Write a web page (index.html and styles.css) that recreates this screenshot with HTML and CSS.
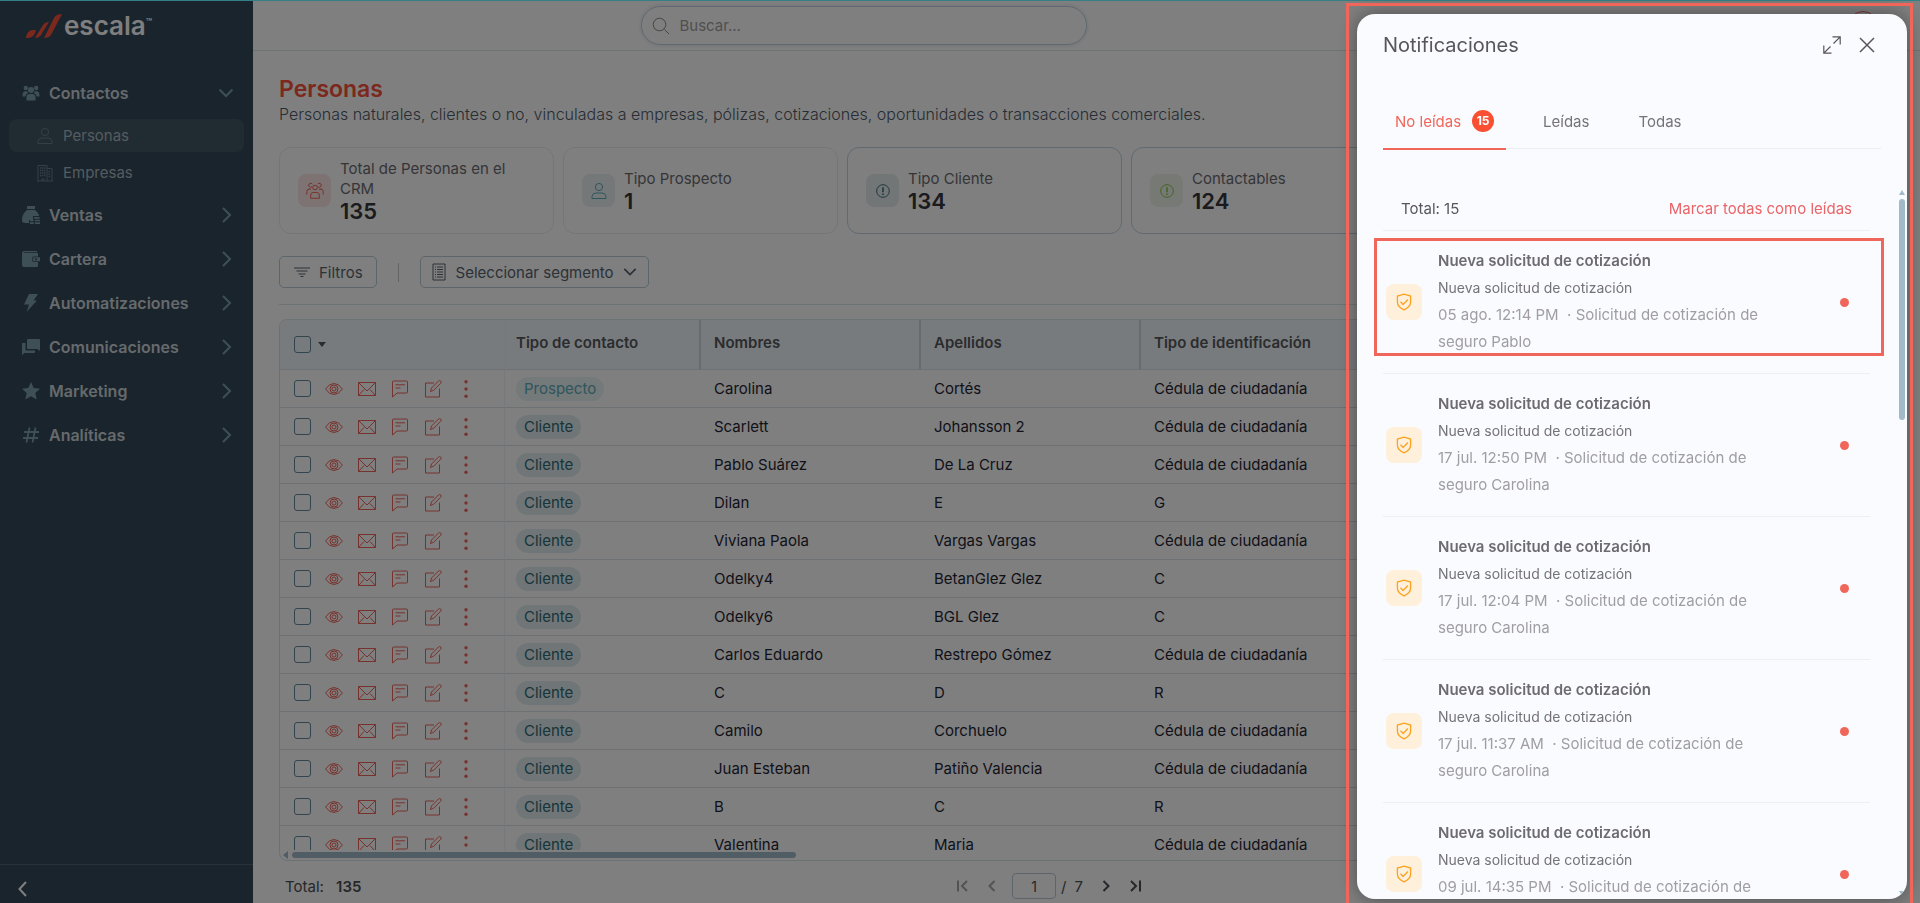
FILE: index.html
```html
<!DOCTYPE html>
<html lang="es">

<head>
    <meta charset="UTF-8">
    <meta name="viewport" content="width=device-width, initial-scale=1.0">
    <title>Escala - Personas</title>
    <link rel="stylesheet" href="styles.css">
</head>

<body>
    <!-- iconos -->
    <svg class="sprite" aria-hidden="true">
        <symbol id="i-users" viewBox="0 0 18 18">
            <circle cx="9" cy="6" r="3"/><circle cx="3.8" cy="4" r="2.2"/><circle cx="14.2" cy="4" r="2.2"/>
            <path d="M4.5 16.5v-3.5a3 3 0 0 1 3-3h3a3 3 0 0 1 3 3v3.5zM.6 12.5V10a3 3 0 0 1 2.4-2.8h2.2A5 5 0 0 0 6.2 9 4.5 4.5 0 0 0 3.2 12.5zM17.4 12.5V10A3 3 0 0 0 15 7.2h-2.2A5 5 0 0 1 11.8 9a4.5 4.5 0 0 1 3 3.500z"/>
        </symbol>
        <symbol id="i-users-o" viewBox="0 0 18 18">
            <circle cx="9" cy="5.5" r="2.3"/><path d="M4.7 16.3v-3.3a2.5 2.5 0 0 1 2.5-2.5h3.6a2.5 2.5 0 0 1 2.5 2.5v3.3zM.8 12.5V9.5a2.3 2.3 0 0 1 2.3-2.3H5M17.2 12.5V9.5a2.3 2.3 0 0 0-2.3-2.3H13M6 4.800A2 2 0 1 1 6.3 2M12 4.800A2 2 0 1 0 11.7 2M3 6.5v.7M15 6.5v.7"/>
        </symbol>
        <symbol id="i-user" viewBox="0 0 18 18">
            <circle cx="9" cy="5" r="3.6"/><path d="M2 16.5v-2a4 4 0 0 1 4-3.500h6a4 4 0 0 1 4 3.500v2z"/>
        </symbol>
        <symbol id="i-building" viewBox="0 0 18 18">
            <path d="M2 17V1.500h9V17M11 4.500h5V17M1 17h16M6 17v-2h2v2"/><path d="M4 4h5.500M4 6.500h5.500M4 9h5.500M4 11.500h5.500M12.500 7.500h2M12.500 10h2M12.500 12.500h2" stroke-dasharray="1.4 .6" stroke-width="1.4"/>
        </symbol>
        <symbol id="i-bag" viewBox="0 0 18 18">
            <path d="M5 0h8v3H5zM5 4h8c3 3 4.500 5 4 6h-6v4H7v3H3q-3 0-3-3Q0 8 5 4z"/><path d="M12 11h5.500v1.800H12zM7.800 13.800h4v1.500h-4zM7.800 16.200h4V18h-4zM12.800 13.800H18v1.500h-5.200zM12.800 16.200H18V18h-5.200z"/>
        </symbol>
        <symbol id="i-wallet" viewBox="0 0 18 18">
            <path fill-rule="evenodd" d="M2.500 1H15v1.200H2.200v.8H16v3.500h-4a2 2 0 0 0-2 2v1.500a2 2 0 0 0 2 2h4V16a1 1 0 0 1-1 1H2a2 2 0 0 1-2-2V3.500A2.500 2.500 0 0 1 2.500 1zM12 7.300h6v4h-6a1.500 1.500 0 0 1-1.300-1.500v-1A1.500 1.500 0 0 1 12 7.300zm1 1.200v1.700h1.700V8.500z"/>
        </symbol>
        <symbol id="i-bolt" viewBox="0 0 18 18"><path d="M7 0h9l-4.500 6.500H15L4.500 18 7 10.500H2z"/></symbol>
        <symbol id="i-chat2" viewBox="0 0 18 18"><path d="M6 1h11a1 1 0 0 1 1 1v11l-2.500-2H6a1 1 0 0 1-1-1V2a1 1 0 0 1 1-1zM0 5h3.500v6.500a1 1 0 0 0 1 1H13V14a1 1 0 0 1-1 1H2.500L0 17z"/></symbol>
        <symbol id="i-star" viewBox="0 0 18 18"><path d="M9 0l2.700 6L18 6.700l-4.700 4.300 1.400 6.500L9 14.200l-5.700 3.300L4.700 11 0 6.700 6.300 6z"/></symbol>
        <symbol id="i-hash" viewBox="0 0 18 18"><path d="M7.500 1.500l-3 15M13.500 1.500l-3 15M2 6h15M1 12h15" stroke-width="1.8"/></symbol>
        <symbol id="i-right" viewBox="0 0 16 16"><path d="M5 1l7 7-7 7"/></symbol>
        <symbol id="i-left" viewBox="0 0 16 16"><path d="M11 1L4.500 8l6.500 7"/></symbol>
        <symbol id="i-down" viewBox="0 0 16 16"><path d="M1.500 4.500L8 11l6.500-6.500"/></symbol>
        <symbol id="i-first" viewBox="0 0 16 16"><path d="M3 2.500v11M12 3L7 8l5 5"/></symbol>
        <symbol id="i-last" viewBox="0 0 16 16"><path d="M13 2.500v11M4 3l5 5-5 5"/></symbol>
        <symbol id="i-prev" viewBox="0 0 16 16"><path d="M10.500 3l-5 5 5 5"/></symbol>
        <symbol id="i-next" viewBox="0 0 16 16"><path d="M5.500 3l5 5-5 5"/></symbol>
        <symbol id="i-search" viewBox="0 0 18 18"><circle cx="7.5" cy="7.5" r="6.3"/><path d="M12.500 12.500L17 17"/></symbol>
        <symbol id="i-info" viewBox="0 0 18 18"><circle cx="9" cy="9" r="6.3"/><path d="M9 5.200v5M9 11.500v1.500" stroke-width="1.6"/></symbol>
        <symbol id="i-filter" viewBox="0 0 18 18"><path d="M1 5h16M3.500 8h11M5.500 11h7M7.500 13.500h3"/></symbol>
        <symbol id="i-list" viewBox="0 0 18 18"><path d="M3 1h12v16H3z"/><path d="M5 4h1M7 4h6M5 6.500h1M7 6.500h6M5 9h1M7 9h6M5 11.500h1M7 11.500h6M5 14h1M7 14h6"/></symbol>
        <symbol id="i-eye" viewBox="0 0 18 18"><path d="M.6 9Q4 3.500 9 3.500T17.400 9Q14 14.500 9 14.500T.6 9z"/><circle cx="9" cy="9" r="4"/><circle cx="9" cy="9" r="2"/></symbol>
        <symbol id="i-mail" viewBox="0 0 18 18"><path d="M.5 2.500h17v13H.5zM.5 2.500L9 11l8.500-8.500M.5 15.500l5.500-6M17.500 15.500l-5.500-6"/></symbol>
        <symbol id="i-chat" viewBox="0 0 18 18"><path d="M1.500 17V2a1 1 0 0 1 1-1h13a1 1 0 0 1 1 1v10a1 1 0 0 1-1 1H6zM4.500 4.800h9.500M4.500 8h5"/></symbol>
        <symbol id="i-edit" viewBox="0 0 18 18"><path d="M10 3H1.500v14h14V8.500M6.500 11.500l1-3.500L14.500 1a1.500 1.500 0 0 1 2.200 2.200l-7 7z"/></symbol>
        <symbol id="i-dots" viewBox="0 0 18 18"><circle cx="9" cy="1.8" r="1.7"/><circle cx="9" cy="9" r="1.7"/><circle cx="9" cy="16.2" r="1.7"/></symbol>
        <symbol id="i-shield" viewBox="0 0 18 18"><path d="M9 1.200L15.600 3v6q0 5-6.600 7.800Q2.400 14 2.400 9V3z"/><path d="M5.500 8.800l2.600 2.700 4.800-5"/></symbol>
        <symbol id="i-expand" viewBox="0 0 18 18"><path d="M9.500.8h7.700v7.700M17.200.8l-6.700 6.700M8.500 17.200H.8V9.500M.8 17.200l6.700-6.700"/></symbol>
        <symbol id="i-close" viewBox="0 0 16 16"><path d="M1 1l14 14M15 1L1 15"/></symbol>
    </svg>

    <div class="layout">
        <aside class="sidebar">
            <a class="logo" href="#">
                <svg class="logo-mark" viewBox="0 0 36 24"><path d="M0 24q1-8 7-8h3q-2 8-8 8zM9 24l8-13q2-3 6-3l-8 13q-2 3-6 3zM18 24L28 4q2-4 8-4L25 21q-2 3-7 3z"/></svg>
                <span>escala</span><sup>™</sup>
            </a>
            <nav class="menu">
                <a href="#"><svg class="ico fill"><use href="#i-users"/></svg><span>Contactos</span><svg class="arrow"><use href="#i-down"/></svg></a>
                <div class="submenu">
                    <a class="active" href="#"><svg class="ico"><use href="#i-user"/></svg>Personas</a>
                    <a href="#"><svg class="ico"><use href="#i-building"/></svg>Empresas</a>
                </div>
                <a href="#"><svg class="ico fill"><use href="#i-bag"/></svg><span>Ventas</span><svg class="arrow"><use href="#i-right"/></svg></a>
                <a href="#"><svg class="ico fill"><use href="#i-wallet"/></svg><span>Cartera</span><svg class="arrow"><use href="#i-right"/></svg></a>
                <a href="#"><svg class="ico fill"><use href="#i-bolt"/></svg><span>Automatizaciones</span><svg class="arrow"><use href="#i-right"/></svg></a>
                <a href="#"><svg class="ico fill"><use href="#i-chat2"/></svg><span>Comunicaciones</span><svg class="arrow"><use href="#i-right"/></svg></a>
                <a href="#"><svg class="ico fill"><use href="#i-star"/></svg><span>Marketing</span><svg class="arrow"><use href="#i-right"/></svg></a>
                <a href="#"><svg class="ico"><use href="#i-hash"/></svg><span>Analíticas</span><svg class="arrow"><use href="#i-right"/></svg></a>
            </nav>
            <button class="collapse" aria-label="Contraer menú"><svg><use href="#i-left"/></svg></button>
        </aside>

        <div class="main">
            <header class="topbar">
                <label class="search">
                    <svg><use href="#i-search"/></svg>
                    <input type="text" placeholder="Buscar..." aria-label="Buscar">
                </label>
                <button class="avatar" aria-label="Perfil"></button>
            </header>

            <main class="content">
                <h1>Personas</h1>
                <p class="desc">Personas naturales, clientes o no, vinculadas a empresas, pólizas, cotizaciones, oportunidades o transacciones comerciales.</p>

                <div class="cards">
                    <div class="card">
                        <div class="card-icon red"><svg><use href="#i-users-o"/></svg></div>
                        <div><div class="label">Total de Personas en el CRM</div><div class="num">135</div></div>
                    </div>
                    <div class="card">
                        <div class="card-icon teal"><svg><use href="#i-user"/></svg></div>
                        <div><div class="label">Tipo Prospecto</div><div class="num">1</div></div>
                    </div>
                    <div class="card click">
                        <div class="card-icon dark"><svg><use href="#i-info"/></svg></div>
                        <div><div class="label">Tipo Cliente</div><div class="num">134</div></div>
                    </div>
                    <div class="card click">
                        <div class="card-icon green"><svg><use href="#i-info"/></svg></div>
                        <div><div class="label">Contactables</div><div class="num">124</div></div>
                    </div>
                </div>

                <div class="tools">
                    <button class="btn"><svg><use href="#i-filter"/></svg>Filtros</button>
                    <span class="sep"></span>
                    <label class="btn segment">
                        <svg><use href="#i-list"/></svg>
                        <select aria-label="Segmento"><option>Seleccionar segmento</option></select>
                        <svg class="caret"><use href="#i-down"/></svg>
                    </label>
                </div>

                <div class="grid">
                    <div class="grid-view">
                        <table>
                            <colgroup><col class="c-actions"><col class="c-type"><col class="c-data"><col class="c-data"><col class="c-data"><col></colgroup>
                            <thead>
                                <tr>
                                    <th><div class="actions"><input type="checkbox" aria-label="Seleccionar todo"><i class="tri"></i></div></th>
                                    <th>Tipo de contacto</th>
                                    <th>Nombres</th>
                                    <th>Apellidos</th>
                                    <th>Tipo de identificación</th>
                                    <th></th>
                                </tr>
                            </thead>
                            <tbody id="rows"></tbody>
                        </table>
                    </div>
                    <div class="hscroll"><i></i><b></b></div>
                </div>

                <footer class="pager">
                    <div class="total">Total: <strong>135</strong></div>
                    <div class="pages">
                        <button disabled aria-label="Primera"><svg><use href="#i-first"/></svg></button>
                        <button disabled aria-label="Anterior"><svg><use href="#i-prev"/></svg></button>
                        <input type="text" value="1" aria-label="Página">
                        <span>/</span><span>7</span>
                        <button aria-label="Siguiente"><svg><use href="#i-next"/></svg></button>
                        <button aria-label="Última"><svg><use href="#i-last"/></svg></button>
                    </div>
                </footer>
            </main>
        </div>
    </div>

    <div class="overlay"></div>
    <div class="progress"></div>
    <div class="frame"></div>

    <section class="drawer">
        <div class="drawer-head">
            <h2>Notificaciones</h2>
            <button aria-label="Expandir"><svg class="expand"><use href="#i-expand"/></svg></button>
            <button aria-label="Cerrar"><svg><use href="#i-close"/></svg></button>
        </div>
        <div class="tabs">
            <button class="active">No leídas <span class="badge">15</span></button>
            <button>Leídas</button>
            <button>Todas</button>
        </div>
        <div class="drawer-body">
            <div class="list">
                <div class="summary"><span>Total: 15</span><a href="#">Marcar todas como leídas</a></div>
                <div id="notes"></div>
            </div>
            <div class="vscroll"><i></i><b></b><i class="end"></i></div>
        </div>
    </section>

    <script src="script.js"></script>
</body>

</html>
```

FILE: styles.css
```css
* {
    box-sizing: border-box;
}
html , body {
    height: 100%;
}
body {
    margin: 0;
    overflow: hidden;
    font-family: Inter, "Noto Sans", sans-serif;
    font-size: 15px;
    color: #1f2533;
}
a {
    text-decoration: none;
    color: inherit;
}
button , input , select {
    font: inherit;
    color: inherit;
}
button {
    background: none;
    border: 0;
    padding: 0;
}
svg {
    width: 18px;
    height: 18px;
    flex: none;
    display: block;
    fill: none;
    stroke: currentColor;
    stroke-width: 1;
}
.sprite {
    display: none;
}
.layout {
    display: flex;
    height: 100%;
}

/* menu lateral */
.sidebar {
    width: 253px;
    flex: none;
    display: flex;
    flex-direction: column;
    background-color: #344858;
    color: #ccd5da;
}
.logo {
    display: flex;
    height: 71px;
    padding: 14px 0 0 26px;
    color: #fff;
    font-size: 26px;
    line-height: 24px;
    font-weight: 600;
}
.logo-mark {
    width: 36px;
    height: 24px;
    margin-right: 2px;
    fill: #f8503a;
    stroke: none;
}
.logo sup {
    font-size: 10px;
    line-height: 16px;
}
.menu {
    flex: 1;
}
.menu > a {
    display: flex;
    align-items: center;
    height: 44px;
    padding: 0 19px 0 22px;
    font-size: 16px;
    font-weight: 600;
}
.menu > a span {
    flex: 1;
    padding-left: 9px;
}
.ico {
    color: #7d9fad;
}
.ico.fill {
    fill: currentColor;
    stroke: none;
}
.arrow {
    width: 16px;
    height: 16px;
    color: #7d9fad;
    stroke-width: 2;
}
.submenu {
    padding: 4px 9px 0;
}
.submenu a {
    display: flex;
    align-items: center;
    gap: 9px;
    height: 33px;
    margin-bottom: 4px;
    padding-left: 27px;
    border-radius: 8px;
    color: #a9b8c1;
}
.submenu .active {
    background-color: #435665;
}
.submenu .ico {
    color: #66828e;
}
.collapse {
    height: 39px;
    padding: 10px 0 0 15px;
    border-top: 1px solid #506271;
    color: #fff;
}
.collapse svg {
    width: 16px;
    height: 16px;
    stroke-width: 2;
}

/* cabecera */
.main {
    flex: 1;
    min-width: 0;
    display: flex;
    flex-direction: column;
    background-color: #fff;
}
.topbar {
    display: grid;
    grid-template-columns: 1fr 1fr;
    align-items: center;
    height: 51px;
    padding-top: 1px;
    border-bottom: 1px solid #dbe9ec;
}
.search {
    justify-self: end;
    display: flex;
    align-items: center;
    gap: 10px;
    width: 446px;
    height: 39px;
    padding: 0 10px;
    border: 1px solid #c0d2de;
    border-radius: 20px;
    box-shadow: 0 0 4px #d5dde2;
    color: #8b8b8b;
}
.search input {
    flex: 1;
    border: 0;
    outline: 0;
    padding: 0;
    background: none;
}
.search input::placeholder {
    color: #a0a0a0;
}
.avatar {
    justify-self: end;
    width: 30px;
    height: 30px;
    margin-right: 42px;
    border: 1px solid #f0645a;
    border-radius: 50%;
}

/* contenido */
.content {
    flex: 1;
    min-height: 0;
    display: flex;
    flex-direction: column;
    padding: 24px 27px 0 26px;
}
h1 {
    margin: 0;
    font-size: 23px;
    line-height: 28px;
    font-weight: 600;
    color: #f8503a;
}
.desc {
    margin: 0;
    font-size: 16px;
    line-height: 22px;
    font-weight: 300;
    color: #4f5a68;
}
.cards {
    display: flex;
    gap: 9px;
    margin: 22px 0;
    overflow: hidden;
}
.card {
    flex: 0 0 275px;
    display: flex;
    align-items: center;
    gap: 9px;
    height: 87px;
    padding: 0 18px;
    border: 1px solid #ebebee;
    border-radius: 12px;
}
.card.click {
    border-color: #c0d4e0;
}
.card-icon {
    display: flex;
    align-items: center;
    justify-content: center;
    flex: none;
    width: 33px;
    height: 33px;
    border-radius: 8px;
}
.red {
    color: #f0645a;
    background-color: #fbe6e4;
}
.teal {
    color: #5eabb8;
    background-color: #e8f1f3;
}
.dark {
    color: #3d707b;
    background-color: #e4ecee;
}
.green {
    color: #86c54b;
    background-color: #eff5e8;
}
.label {
    line-height: 20px;
    color: #6b6b70;
}
.num {
    font-size: 22px;
    line-height: 24px;
    font-weight: 600;
    color: #37373c;
}
.tools {
    display: flex;
    align-items: center;
    gap: 21px;
    padding-bottom: 16px;
    border-bottom: 1px solid #dbe7ea;
}
.btn {
    display: flex;
    align-items: center;
    gap: 8px;
    height: 32px;
    padding: 0 13px;
    border: 1px solid #b9cbd5;
    border-radius: 5px;
    color: #56646f;
}
.btn select {
    appearance: none;
    border: 0;
    padding: 0;
    background: none;
}
.segment {
    padding: 0 11px 0 9px;
}
.btn .caret {
    width: 14px;
    height: 14px;
    stroke-width: 2;
}
.sep {
    width: 1px;
    height: 19px;
    background-color: #c5c9cc;
}

/* tabla */
.grid {
    flex: 1;
    min-height: 0;
    display: flex;
    flex-direction: column;
    margin-top: 14px;
    border: 1px solid #d9e3e8;
    border-radius: 8px;
    overflow: hidden;
}
.grid-view {
    flex: 1;
    min-height: 0;
    overflow: hidden;
}
table {
    width: 100%;
    table-layout: fixed;
    border-collapse: separate;
    border-spacing: 0;
}
.c-actions {
    width: 225px;
}
.c-type {
    width: 196px;
}
.c-data {
    width: 220px;
}
th , td {
    height: 38px;
    padding: 0 13px;
    border-bottom: 1px solid #dce2e6;
    text-align: left;
    white-space: nowrap;
}
th {
    height: 50px;
    padding-bottom: 4px;
    background-color: #f0f6fa;
    border-right: 2px solid #d2d8dc;
    font-weight: 600;
    color: #55585d;
}
th:nth-child(2) , td:nth-child(2) {
    padding-left: 11px;
}
th:first-child , td:first-child {
    padding: 0 0 0 14px;
    border-right: 1px solid #f0f2f4;
}
.actions {
    display: flex;
    align-items: center;
    color: #f0645a;
}
.actions input {
    appearance: none;
    width: 17px;
    height: 17px;
    margin: 0 14px 0 0;
    border: 1px solid #64899c;
    border-radius: 3px;
}
.actions svg {
    margin-right: 15px;
}
.actions .dots {
    fill: currentColor;
    stroke: none;
}
th .actions input {
    margin-right: 7px;
}
.tri {
    border: 4px solid transparent;
    border-top: 5px solid #55585d;
    border-bottom: 0;
}
.pill {
    display: inline-block;
    padding: 0 8px;
    line-height: 24px;
    border-radius: 12px;
    background-color: #e0ebee;
    color: #316b74;
}
.pill.new {
    background-color: #e8f2f4;
    color: #5fadb8;
}
.hscroll {
    display: flex;
    align-items: center;
    gap: 4px;
    height: 10px;
    padding-left: 3px;
}
.hscroll i {
    border: 4px solid transparent;
    border-right: 5px solid #a0bac8;
    border-left: 0;
}
.hscroll b {
    width: 504px;
    height: 6px;
    border-radius: 3px;
    background-color: #a0bac8;
}
.pager {
    display: grid;
    grid-template-columns: 1fr auto 1fr;
    align-items: center;
    height: 42px;
    padding: 8px 80px 0 6px;
    color: #4b4f55;
}
.total strong {
    padding-left: 8px;
    font-weight: 600;
}
.pages {
    display: flex;
    align-items: center;
    gap: 5px;
}
.pages button {
    width: 24px;
    padding-left: 4px;
}
.pages button:disabled {
    opacity: .5;
}
.pages svg {
    width: 16px;
    height: 16px;
    stroke-width: 2;
}
.pages span + span {
    padding: 0 6px 0 3px;
}
.pages input {
    width: 44px;
    height: 26px;
    margin-left: 3px;
    border: 1px solid #b9cbd5;
    border-radius: 4px;
    background: none;
    text-align: center;
    font-size: 14px;
}

/* capas */
.overlay {
    position: fixed;
    inset: 0;
    background-color: rgba(0, 0, 0, .5);
}
.progress {
    position: fixed;
    top: 0;
    left: 0;
    right: 0;
    height: 1px;
    background-color: #328085;
}
.frame {
    position: fixed;
    top: 3px;
    right: 7px;
    bottom: -5px;
    width: 567px;
    border: 3px solid #f0665b;
    z-index: 2;
}

/* panel de notificaciones */
.drawer {
    position: fixed;
    top: 14px;
    right: 13px;
    bottom: 4px;
    width: 550px;
    display: flex;
    flex-direction: column;
    border-radius: 18px;
    overflow: hidden;
    background-color: #fafbfe;
    box-shadow: 0 0 20px rgba(0, 0, 0, .4);
    color: #58565b;
}
.drawer-head {
    display: flex;
    align-items: center;
    gap: 18px;
    height: 61px;
    padding: 0 32px 0 26px;
}
.drawer-head h2 {
    flex: 1;
    margin: 0;
    font-size: 20px;
    font-weight: 400;
}
.drawer-head svg {
    width: 16px;
    height: 16px;
    stroke-width: 1.5;
}
.drawer-head .expand {
    width: 18px;
    height: 18px;
    stroke-width: 1.2;
}
.tabs {
    display: flex;
    height: 61px;
    margin: 13px 26px 0;
    border-bottom: 1px solid #eceef1;
}
.tabs button {
    height: 62px;
    padding: 6px 12px 0;
    margin-right: 25px;
    color: #757377;
    border-bottom: 2px solid transparent;
}
.tabs .active {
    display: flex;
    align-items: center;
    gap: 11px;
    color: #f0665b;
    border-color: #f0665b;
}
.badge {
    width: 22px;
    line-height: 22px;
    border-radius: 50%;
    background-color: #f94f33;
    color: #fff;
    font-size: 12px;
    font-weight: 700;
}
.drawer-body {
    flex: 1;
    min-height: 0;
    display: flex;
    margin-top: 39px;
}
.list {
    flex: 1;
    padding: 0 27px 0 26px;
    overflow: hidden;
}
.summary {
    display: flex;
    justify-content: space-between;
    height: 43px;
    padding: 9px 18px 0;
    line-height: 24px;
    border-bottom: 1px solid #eeeff2;
}
.summary a {
    color: #ea6468;
}
.note {
    position: relative;
    display: flex;
    align-items: center;
    height: 143px;
    padding-left: 3px;
    border-bottom: 1px solid #eeeff2;
    line-height: 27px;
}
.note-icon {
    display: flex;
    align-items: center;
    justify-content: center;
    width: 36px;
    height: 36px;
    margin-right: 16px;
    border-radius: 8px;
    background-color: #fff0dc;
    color: #fba31f;
}
.note-icon svg {
    stroke-width: 1.3;
}
.note-text {
    width: 336px;
    padding-bottom: 2px;
    color: #757377;
}
.note-text h3 {
    margin: 0;
    font-size: 15px;
    font-weight: 600;
    color: #6d6b70;
}
.note-text p {
    margin: 0;
    font-size: 14px;
}
.note-text .date {
    font-size: 15px;
    color: #a09ea2;
}
.dot {
    width: 9px;
    height: 9px;
    margin: 0 21px 0 auto;
    border-radius: 50%;
    background-color: #f0665b;
}
.note:first-child::after {
    content: "";
    position: absolute;
    top: 7px;
    right: -14px;
    bottom: 17px;
    left: -9px;
    border: 3px solid #f0665b;
}
.vscroll {
    display: flex;
    flex-direction: column;
    align-items: center;
    width: 10px;
    padding: 2px 0 3px;
}
.vscroll i {
    border: 3px solid transparent;
    border-bottom: 5px solid #a0bac8;
    border-top: 0;
}
.vscroll .end {
    margin-top: auto;
    border-top: 5px solid #a0bac8;
    border-bottom: 0;
}
.vscroll b {
    width: 6px;
    height: 221px;
    margin-top: 4px;
    border-radius: 3px;
    background-color: #a0bac8;
}
```

FILE: script.js
```js
var people = [
    ["Prospecto", "Carolina", "Cortés", "Cédula de ciudadanía"],
    ["Cliente", "Scarlett", "Johansson 2", "Cédula de ciudadanía"],
    ["Cliente", "Pablo Suárez", "De La Cruz", "Cédula de ciudadanía"],
    ["Cliente", "Dilan", "E", "G"],
    ["Cliente", "Viviana Paola", "Vargas Vargas", "Cédula de ciudadanía"],
    ["Cliente", "Odelky4", "BetanGlez Glez", "C"],
    ["Cliente", "Odelky6", "BGL Glez", "C"],
    ["Cliente", "Carlos Eduardo", "Restrepo Gómez", "Cédula de ciudadanía"],
    ["Cliente", "C", "D", "R"],
    ["Cliente", "Camilo", "Corchuelo", "Cédula de ciudadanía"],
    ["Cliente", "Juan Esteban", "Patiño Valencia", "Cédula de ciudadanía"],
    ["Cliente", "B", "C", "R"],
    ["Cliente", "Valentina", "Maria", "Cédula de ciudadanía"]
];
var notes = [
    ["05 ago. 12:14 PM", "Pablo"],
    ["17 jul. 12:50 PM", "Carolina"],
    ["17 jul. 12:04 PM", "Carolina"],
    ["17 jul. 11:37 AM", "Carolina"],
    ["09 jul. 14:35 PM", "Carolina"]
];

var icon = function(name, cls){
    return '<svg class="' + (cls || "") + '"><use href="#i-' + name + '"/></svg>';
}

// filas de la tabla
var html = "";
for(var i = 0; i < people.length; i ++){
    var p = people[i];
    html += '<tr><td><div class="actions"><input type="checkbox" aria-label="' + p[1] + '">' +
        icon("eye") + icon("mail") + icon("chat") + icon("edit") + icon("dots", "dots") + '</div></td>' +
        '<td><span class="pill' + (p[0] == "Prospecto" ? " new" : "") + '">' + p[0] + '</span></td>' +
        '<td>' + p[1] + '</td><td>' + p[2] + '</td><td>' + p[3] + '</td><td></td></tr>';
}
document.getElementById("rows").innerHTML = html;

// notificaciones
html = "";
for(var j = 0; j < notes.length; j ++){
    html += '<div class="note"><div class="note-icon">' + icon("shield") + '</div>' +
        '<div class="note-text"><h3>Nueva solicitud de cotización</h3><p>Nueva solicitud de cotización</p>' +
        '<p class="date">' + notes[j][0] + ' &nbsp;· Solicitud de cotización de seguro ' + notes[j][1] + '</p></div>' +
        '<span class="dot"></span></div>';
}
document.getElementById("notes").innerHTML = html;
```
